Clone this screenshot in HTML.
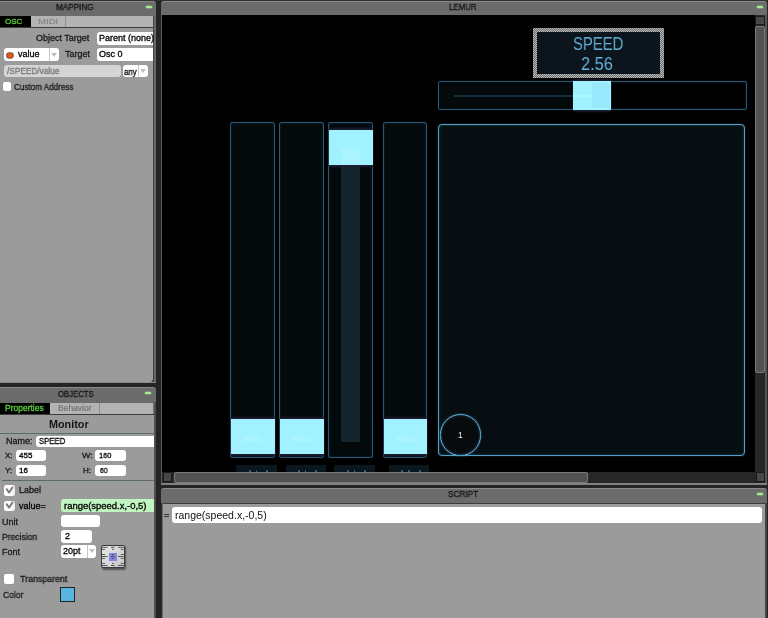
<!DOCTYPE html>
<html><head><meta charset="utf-8">
<style>
*{margin:0;padding:0;box-sizing:border-box}
html,body{width:768px;height:618px;overflow:hidden;background:#242424;font-family:"Liberation Sans",sans-serif}
.a{position:absolute}
.t{position:absolute;white-space:nowrap;line-height:1;transform-origin:0 0;-webkit-font-smoothing:antialiased;will-change:transform}
.hdr{position:absolute;background:#6b6b6b;border-top:1px solid #8a8a8a;border-radius:3px 3px 0 0}
.led{position:absolute;width:6px;height:2px;background:#a4ef8c;border-radius:1px;box-shadow:0 0 1px 0.5px rgba(164,239,140,.6)}
.fld{position:absolute;background:#fff;border-radius:3px}
.cb{position:absolute;background:#fff;border-radius:2px}
.lab{color:#1a1a1a;font-size:9px;-webkit-text-stroke:.3px currentColor}
.hdrt{color:#161616;font-size:8.5px;-webkit-text-stroke:.3px currentColor}
.fad{position:absolute;border:1px solid #295a75;border-radius:2.5px;background:#040a0c;box-shadow:inset 0 0 3px rgba(42,93,122,.35),0 0 1px rgba(42,93,122,.5)}
.cap{position:absolute;background:#a0f2fe;box-shadow:0 -2px 1.5px #1f1b33,0 2px 1.5px #1f1b33,0 0 1.5px .5px #2a2545}
</style></head><body>
<!-- top dark line -->
<div class="a" style="left:0;top:0;width:768px;height:1px;background:#303030"></div>

<!-- ============ MAPPING PANEL ============ -->
<div class="hdr" style="left:0;top:1px;width:156px;height:15px;border-radius:0 3px 0 0"></div>
<div class="t hdrt" style="left:55.5px;top:3px;transform:scaleX(.96)">MAPPING</div>
<div class="led" style="left:145.5px;top:5.5px"></div>
<!-- tabs -->
<div class="a" style="left:0;top:16px;width:153px;height:11px;background:#b3b3b3"></div>
<div class="a" style="left:0;top:16px;width:31px;height:11px;background:#000"></div>
<div class="a" style="left:65px;top:16px;width:1px;height:11px;background:#8f8f8f"></div>
<div class="t" style="left:5px;top:18px;font-size:8px;color:#5bc83d;-webkit-text-stroke:.35px #5bc83d">OSC</div>
<div class="t" style="left:38px;top:18px;font-size:8px;color:#787878;transform:scaleX(1.2)">MIDI</div>
<div class="a" style="left:0;top:27px;width:153px;height:1px;background:#3c3c3c"></div>
<!-- body -->
<div class="a" style="left:0;top:28px;width:153px;height:354px;background:#9b9b9b;border-radius:0 0 3px 0"></div>
<div class="a" style="left:153px;top:16px;width:1px;height:366px;background:#444"></div>
<div class="a" style="left:154px;top:16px;width:2px;height:366px;background:#666"></div>

<div class="t lab" style="left:36px;top:34px">Object Target</div>
<div class="fld" style="left:97px;top:32px;width:56px;height:12.5px;border-radius:3px 0 0 3px"></div>
<div class="t lab" style="left:99px;top:34px;color:#000">Parent (none)</div>

<div class="fld" style="left:4px;top:48px;width:55px;height:13px"></div>
<div class="a" style="left:49px;top:48px;width:1px;height:13px;background:#c8c8c8"></div>
<div class="a" style="left:7.3px;top:52.6px;width:5.8px;height:5.8px;border-radius:50%;background:#e0561a;box-shadow:0 0 0 .8px #6a4a3a"></div>
<div class="t lab" style="left:18px;top:50px;color:#000">value</div>
<div class="a" style="left:51px;top:53px;width:0;height:0;border-left:3.5px solid transparent;border-right:3.5px solid transparent;border-top:4px solid #c0c0c0"></div>
<div class="t lab" style="left:65px;top:50px">Target</div>
<div class="fld" style="left:97px;top:48.4px;width:56px;height:12.5px;border-radius:3px 0 0 3px"></div>
<div class="t lab" style="left:99px;top:50px;color:#000">Osc 0</div>

<div class="a" style="left:4px;top:65px;width:117px;height:12px;background:#d5d5d5;border-radius:3px"></div>
<div class="t lab" style="left:7px;top:67px;color:#777;transform:scaleX(.92)">/SPEED/value</div>
<div class="fld" style="left:123px;top:65px;width:25px;height:12px"></div>
<div class="a" style="left:138px;top:65px;width:1px;height:12px;background:#c8c8c8"></div>
<div class="t lab" style="left:124px;top:68px;color:#000;font-size:8.5px;transform:scaleX(.92)">any</div>
<div class="a" style="left:140px;top:69px;width:0;height:0;border-left:3.5px solid transparent;border-right:3.5px solid transparent;border-top:4px solid #c0c0c0"></div>

<div class="cb" style="left:3px;top:82px;width:8px;height:9px"></div>
<div class="t lab" style="left:13.5px;top:83px;transform:scaleX(.9)">Custom Address</div>

<!-- ============ OBJECTS PANEL ============ -->
<div class="a" style="left:0;top:382px;width:156px;height:1px;background:#8a8a8a"></div>
<div class="hdr" style="left:0;top:387px;width:156px;height:16px;border-radius:0 3px 0 0"></div>
<div class="t hdrt" style="left:57.5px;top:389.5px;transform:scaleX(.91)">OBJECTS</div>
<div class="led" style="left:145px;top:392px"></div>
<div class="a" style="left:0;top:403px;width:153px;height:11px;background:#b3b3b3"></div>
<div class="a" style="left:0;top:403px;width:50px;height:11px;background:#000"></div>
<div class="a" style="left:99px;top:403px;width:1px;height:11px;background:#8f8f8f"></div>
<div class="t" style="left:5px;top:404px;font-size:8.5px;color:#5bc83d;-webkit-text-stroke:.35px #5bc83d">Properties</div>
<div class="t" style="left:58px;top:404px;font-size:8.5px;color:#727272;-webkit-text-stroke:.2px #727272">Behavior</div>
<div class="a" style="left:0;top:414px;width:153px;height:1px;background:#3c3c3c"></div>
<div class="a" style="left:0;top:415px;width:154px;height:203px;background:#9b9b9b"></div>
<div class="a" style="left:154px;top:402px;width:2px;height:216px;background:linear-gradient(90deg,#5a5a5a,#444)"></div><div class="a" style="left:153px;top:402px;width:1px;height:12px;background:#666"></div>
<div class="a" style="left:153px;top:403px;width:1px;height:11px;background:#707070"></div>

<div class="t" style="left:48.5px;top:420px;font-size:10px;font-weight:bold;color:#151515;transform:scaleX(1.08)">Monitor</div>
<div class="a" style="left:0;top:433px;width:154px;height:1px;background:#5b6a6a"></div>
<div class="t lab" style="left:6px;top:437px">Name:</div>
<div class="fld" style="left:36px;top:435.5px;width:118px;height:11px;border-radius:3px 0 0 3px"></div>
<div class="t lab" style="left:39px;top:437px;color:#000;transform:scaleX(.86)">SPEED</div>
<div class="t lab" style="left:5px;top:452px;font-size:8px">X:</div>
<div class="fld" style="left:16px;top:450px;width:30px;height:11px"></div>
<div class="t lab" style="left:19px;top:452px;font-size:8px;color:#000">455</div>
<div class="t lab" style="left:82px;top:452px;font-size:8px;transform:scaleX(1.12)">W:</div>
<div class="fld" style="left:95px;top:450px;width:31px;height:11px"></div>
<div class="t lab" style="left:99px;top:452px;font-size:8px;color:#000;transform:scaleX(.92)">160</div>
<div class="t lab" style="left:5px;top:467px;font-size:8px">Y:</div>
<div class="fld" style="left:16px;top:465px;width:30px;height:11px"></div>
<div class="t lab" style="left:19px;top:467px;font-size:8px;color:#000">16</div>
<div class="t lab" style="left:83px;top:467px;font-size:8px">H:</div>
<div class="fld" style="left:95px;top:465px;width:31px;height:11px"></div>
<div class="t lab" style="left:99.5px;top:467px;font-size:8px;color:#000;transform:scaleX(.85)">60</div>
<div class="a" style="left:2px;top:480px;width:152px;height:1px;background:#5b6a6a"></div>

<div class="cb" style="left:4px;top:485px;width:10.5px;height:10.5px;border-radius:2.5px;background:linear-gradient(90deg,#fff 60%,#e8e8e8)"></div>
<svg class="a" style="left:4px;top:485px" width="11" height="11"><path d="M2.6 4.2 L5.2 7.6 L8.4 2.6" fill="none" stroke="#7a7a7a" stroke-width="1.9" stroke-linecap="round" stroke-linejoin="round"/></svg>
<div class="t lab" style="left:19px;top:486px">Label</div>
<div class="cb" style="left:4px;top:500.5px;width:10.5px;height:10.5px;border-radius:2.5px;background:linear-gradient(90deg,#fff 60%,#e8e8e8)"></div>
<svg class="a" style="left:4px;top:500px" width="11" height="11"><path d="M2.6 4.2 L5.2 7.6 L8.4 2.6" fill="none" stroke="#7a7a7a" stroke-width="1.9" stroke-linecap="round" stroke-linejoin="round"/></svg>
<div class="t lab" style="left:19px;top:502px;color:#000">value=</div>
<div class="a" style="left:61px;top:499px;width:93px;height:13px;background:#c0f4c0;border-radius:3px 0 0 3px"></div>
<div class="t lab" style="left:64px;top:501.5px;color:#000;transform:scaleX(1.05)">range(speed.x,-0,5)</div>
<div class="t lab" style="left:2px;top:517.5px">Unit</div>
<div class="fld" style="left:61px;top:515px;width:39px;height:12px"></div>
<div class="t lab" style="left:2px;top:532.5px;transform:scaleX(.95)">Precision</div>
<div class="fld" style="left:61px;top:530px;width:31px;height:13px"></div>
<div class="t lab" style="left:65px;top:532px;color:#000">2</div>
<div class="t lab" style="left:2px;top:547.5px">Font</div>
<div class="fld" style="left:61px;top:545px;width:35px;height:13px"></div>
<div class="a" style="left:87px;top:545px;width:1px;height:13px;background:#c8c8c8"></div>
<div class="t lab" style="left:63px;top:547px;color:#000">20pt</div>
<div class="a" style="left:89px;top:549px;width:0;height:0;border-left:3px solid transparent;border-right:3px solid transparent;border-top:4px solid #c0c0c0"></div>
<!-- align widget -->
<div class="a" style="left:101px;top:544.5px;width:24px;height:23.5px;border:1px solid #3a3a3a;border-radius:2px;background:linear-gradient(135deg,#e6e6e6,#c8c8c8);box-shadow:1px 1.5px 1.5px rgba(0,0,0,.45)"></div>
<div class="a" style="left:109px;top:553px;width:8px;height:8px;background:#8585dd"></div>
<svg class="a" style="left:101px;top:544px" width="24" height="24"><g stroke="#404040" stroke-width="1" opacity=".85"><line x1="1.0" y1="3.3" x2="6.5" y2="3.3"/><line x1="10.0" y1="3.3" x2="13.7" y2="3.3"/><line x1="17.0" y1="3.3" x2="22.7" y2="3.3"/><line x1="1.0" y1="5.3" x2="4.0" y2="5.3"/><line x1="11.0" y1="5.3" x2="12.8" y2="5.3"/><line x1="19.8" y1="5.3" x2="22.7" y2="5.3"/><line x1="1.0" y1="10.5" x2="4.0" y2="10.5"/><line x1="11.0" y1="10.5" x2="12.8" y2="10.5"/><line x1="19.8" y1="10.5" x2="22.7" y2="10.5"/><line x1="1.0" y1="12.5" x2="6.5" y2="12.5"/><line x1="10.0" y1="12.5" x2="13.7" y2="12.5"/><line x1="17.0" y1="12.5" x2="22.7" y2="12.5"/><line x1="1.0" y1="14.4" x2="4.0" y2="14.4"/><line x1="11.0" y1="14.4" x2="12.8" y2="14.4"/><line x1="19.8" y1="14.4" x2="22.7" y2="14.4"/><line x1="1.0" y1="19.4" x2="4.0" y2="19.4"/><line x1="11.0" y1="19.4" x2="12.8" y2="19.4"/><line x1="19.8" y1="19.4" x2="22.7" y2="19.4"/><line x1="1.0" y1="21.5" x2="6.5" y2="21.5"/><line x1="10.0" y1="21.5" x2="13.7" y2="21.5"/><line x1="17.0" y1="21.5" x2="22.7" y2="21.5"/></g></svg>

<div class="cb" style="left:4px;top:574px;width:10px;height:10px"></div>
<div class="t lab" style="left:19.5px;top:575px;transform:scaleX(.98)">Transparent</div>
<div class="t lab" style="left:2.5px;top:590.5px;transform:scaleX(.95)">Color</div>
<div class="a" style="left:60px;top:587px;width:15px;height:15px;background:#5ab4e0;border:1px solid #222"></div>

<!-- ============ LEMUR PANEL ============ -->
<div class="hdr" style="left:161px;top:1px;width:606px;height:15px"></div>
<div class="t hdrt" style="left:448.5px;top:3px;transform:scaleX(.93)">LEMUR</div>
<div class="led" style="left:757px;top:5.5px"></div>
<div class="a" style="left:161px;top:15px;width:1px;height:470px;background:#5a5a5a"></div>
<div class="a" style="left:765px;top:15px;width:2px;height:470px;background:#555"></div>
<div class="a" style="left:162px;top:15px;width:593px;height:457px;background:#000"></div>
<!-- v scrollbar -->
<div class="a" style="left:755px;top:15px;width:10px;height:457px;background:#272727"></div>
<div class="a" style="left:755px;top:16px;width:10px;height:9px;background:#474747;border:1px solid #1a1a1a;border-radius:1px"></div>
<div class="a" style="left:755px;top:26px;width:10px;height:347px;background:#525252;border:1px solid #7a7a7a;border-radius:2px"></div>
<!-- h scrollbar -->
<div class="a" style="left:162px;top:472px;width:593px;height:11px;background:#272727"></div>
<div class="a" style="left:163px;top:472px;width:9px;height:10px;background:#474747;border:1px solid #1a1a1a;border-radius:1px"></div>
<div class="a" style="left:174px;top:472px;width:414px;height:11px;background:#525252;border:1px solid #7a7a7a;border-radius:2px"></div>
<div class="a" style="left:756px;top:472px;width:9px;height:10px;background:#474747;border:1px solid #1a1a1a"></div>
<div class="a" style="left:161px;top:483px;width:606px;height:2px;background:#808080"></div>

<!-- widgets -->
<div class="fad" style="left:230px;top:122px;width:45px;height:336px"></div>
<div class="fad" style="left:279px;top:122px;width:45px;height:336px"></div>
<div class="fad" style="left:328px;top:122px;width:45px;height:336px"></div>
<div class="fad" style="left:383px;top:122px;width:44px;height:336px"></div>
<div class="a" style="left:341px;top:165px;width:19px;height:277px;background:#13262d"></div>
<div class="cap" style="left:230.5px;top:418.5px;width:44px;height:35px"></div>
<div class="cap" style="left:279.5px;top:418.5px;width:44px;height:35px"></div>
<div class="cap" style="left:328.5px;top:130px;width:44px;height:35px"></div>
<div class="cap" style="left:383.5px;top:418.5px;width:43.5px;height:35px"></div>
<div class="a" style="left:243px;top:436px;width:19px;height:6px;background:#aaf4ff"></div>
<div class="a" style="left:292px;top:436px;width:19px;height:6px;background:#aaf4ff"></div>
<div class="a" style="left:341px;top:148px;width:19px;height:17px;background:#aaf4ff"></div>
<div class="a" style="left:396px;top:436px;width:19px;height:6px;background:#aaf4ff"></div>
<div class="a" style="left:236px;top:464.5px;width:41px;height:7.5px;background:#0a171c"></div>
<div class="a" style="left:285.5px;top:464.5px;width:40.5px;height:7.5px;background:#0a171c"></div>
<div class="a" style="left:334.3px;top:464.5px;width:40.5px;height:7.5px;background:#0a171c"></div>
<div class="a" style="left:389px;top:464.5px;width:40px;height:7.5px;background:#0a171c"></div>

<div class="a" style="left:248.8px;top:469.5px;width:2.0px;height:2.5px;background:#306f92;border-radius:1px 1px 0 0"></div>
<div class="a" style="left:255.5px;top:469.5px;width:1.5px;height:2.5px;background:#306f92;border-radius:1px 1px 0 0"></div>
<div class="a" style="left:266.0px;top:469.5px;width:2.0px;height:2.5px;background:#306f92;border-radius:1px 1px 0 0"></div>
<div class="a" style="left:297.8px;top:469.5px;width:2.0px;height:2.5px;background:#306f92;border-radius:1px 1px 0 0"></div>
<div class="a" style="left:304.5px;top:469.5px;width:1.5px;height:2.5px;background:#306f92;border-radius:1px 1px 0 0"></div>
<div class="a" style="left:315.0px;top:469.5px;width:2.0px;height:2.5px;background:#306f92;border-radius:1px 1px 0 0"></div>
<div class="a" style="left:346.8px;top:469.5px;width:2.0px;height:2.5px;background:#306f92;border-radius:1px 1px 0 0"></div>
<div class="a" style="left:353.5px;top:469.5px;width:1.5px;height:2.5px;background:#306f92;border-radius:1px 1px 0 0"></div>
<div class="a" style="left:364.0px;top:469.5px;width:2.0px;height:2.5px;background:#306f92;border-radius:1px 1px 0 0"></div>
<div class="a" style="left:401.3px;top:469.5px;width:2.0px;height:2.5px;background:#306f92;border-radius:1px 1px 0 0"></div>
<div class="a" style="left:408.0px;top:469.5px;width:1.5px;height:2.5px;background:#306f92;border-radius:1px 1px 0 0"></div>
<div class="a" style="left:418.5px;top:469.5px;width:2.0px;height:2.5px;background:#306f92;border-radius:1px 1px 0 0"></div>
<!-- h fader -->
<div class="fad" style="left:438px;top:81px;width:309px;height:29px;background:#000;border-radius:2px"></div>
<div class="a" style="left:439px;top:82px;width:134px;height:27px;background:#040a0c"></div>
<div class="a" style="left:454px;top:95px;width:138px;height:2px;background:#14303c"></div>
<div class="cap" style="left:573px;top:81px;width:38px;height:29px"></div>
<div class="a" style="left:592px;top:83px;width:18px;height:24.5px;background:#98e9fb"></div>
<div class="a" style="left:573px;top:94.8px;width:19px;height:2.4px;background:#adf9ff"></div>

<!-- xy pad -->
<div class="a" style="left:438px;top:124px;width:307px;height:332px;border:1px solid #559fc6;border-radius:4px;background:#070e11;box-shadow:inset 0 0 3px rgba(60,130,170,.45),0 0 1.5px rgba(80,150,190,.5)"></div>
<div class="a" style="left:439.5px;top:414px;width:41.5px;height:41.5px;border:1.6px solid #5cb0dc;border-radius:50%;box-shadow:0 0 2px rgba(90,170,220,.6),inset 0 0 3px rgba(90,170,220,.35);background:#070b0e"></div>
<div class="t" style="left:457.5px;top:430.5px;font-size:8.5px;color:#ececec;font-family:'Liberation Sans',sans-serif">1</div>

<!-- monitor -->
<div class="a" style="left:533px;top:28px;width:131px;height:50px;background:repeating-conic-gradient(#bcbcbc 0 25%,#686868 0 50%) 0 0/2px 2px"></div>
<div class="a" style="left:537px;top:32px;width:123px;height:42px;background:#0b151b"></div>
<div class="t" style="left:573px;top:35px;font-size:18px;color:#64b2da;transform:scaleX(.825)">SPEED</div>
<div class="t" style="left:580.5px;top:55px;font-size:18px;color:#64b2da;transform:scaleX(.91)">2.56</div>

<!-- ============ SCRIPT PANEL ============ -->
<div class="hdr" style="left:161px;top:488px;width:606px;height:16px"></div>
<div class="t hdrt" style="left:448px;top:490px;transform:scaleX(.97)">SCRIPT</div>
<div class="led" style="left:757px;top:493px"></div>
<div class="a" style="left:162px;top:503px;width:604px;height:1px;background:#3c3c3c"></div>
<div class="a" style="left:162px;top:504px;width:603px;height:114px;background:#9b9b9b"></div>
<div class="a" style="left:161px;top:503px;width:1px;height:115px;background:#2a2a2a"></div><div class="a" style="left:162px;top:503px;width:1px;height:115px;background:#6a6a6a"></div>
<div class="a" style="left:765px;top:503px;width:2px;height:115px;background:#444"></div>
<div class="t lab" style="left:164px;top:511px;color:#111">=</div>
<div class="fld" style="left:172px;top:507px;width:590px;height:16px"></div>
<div class="t" style="left:174.5px;top:510px;font-size:10.5px;color:#111">range(speed.x,-0,5)</div>

</body></html>
